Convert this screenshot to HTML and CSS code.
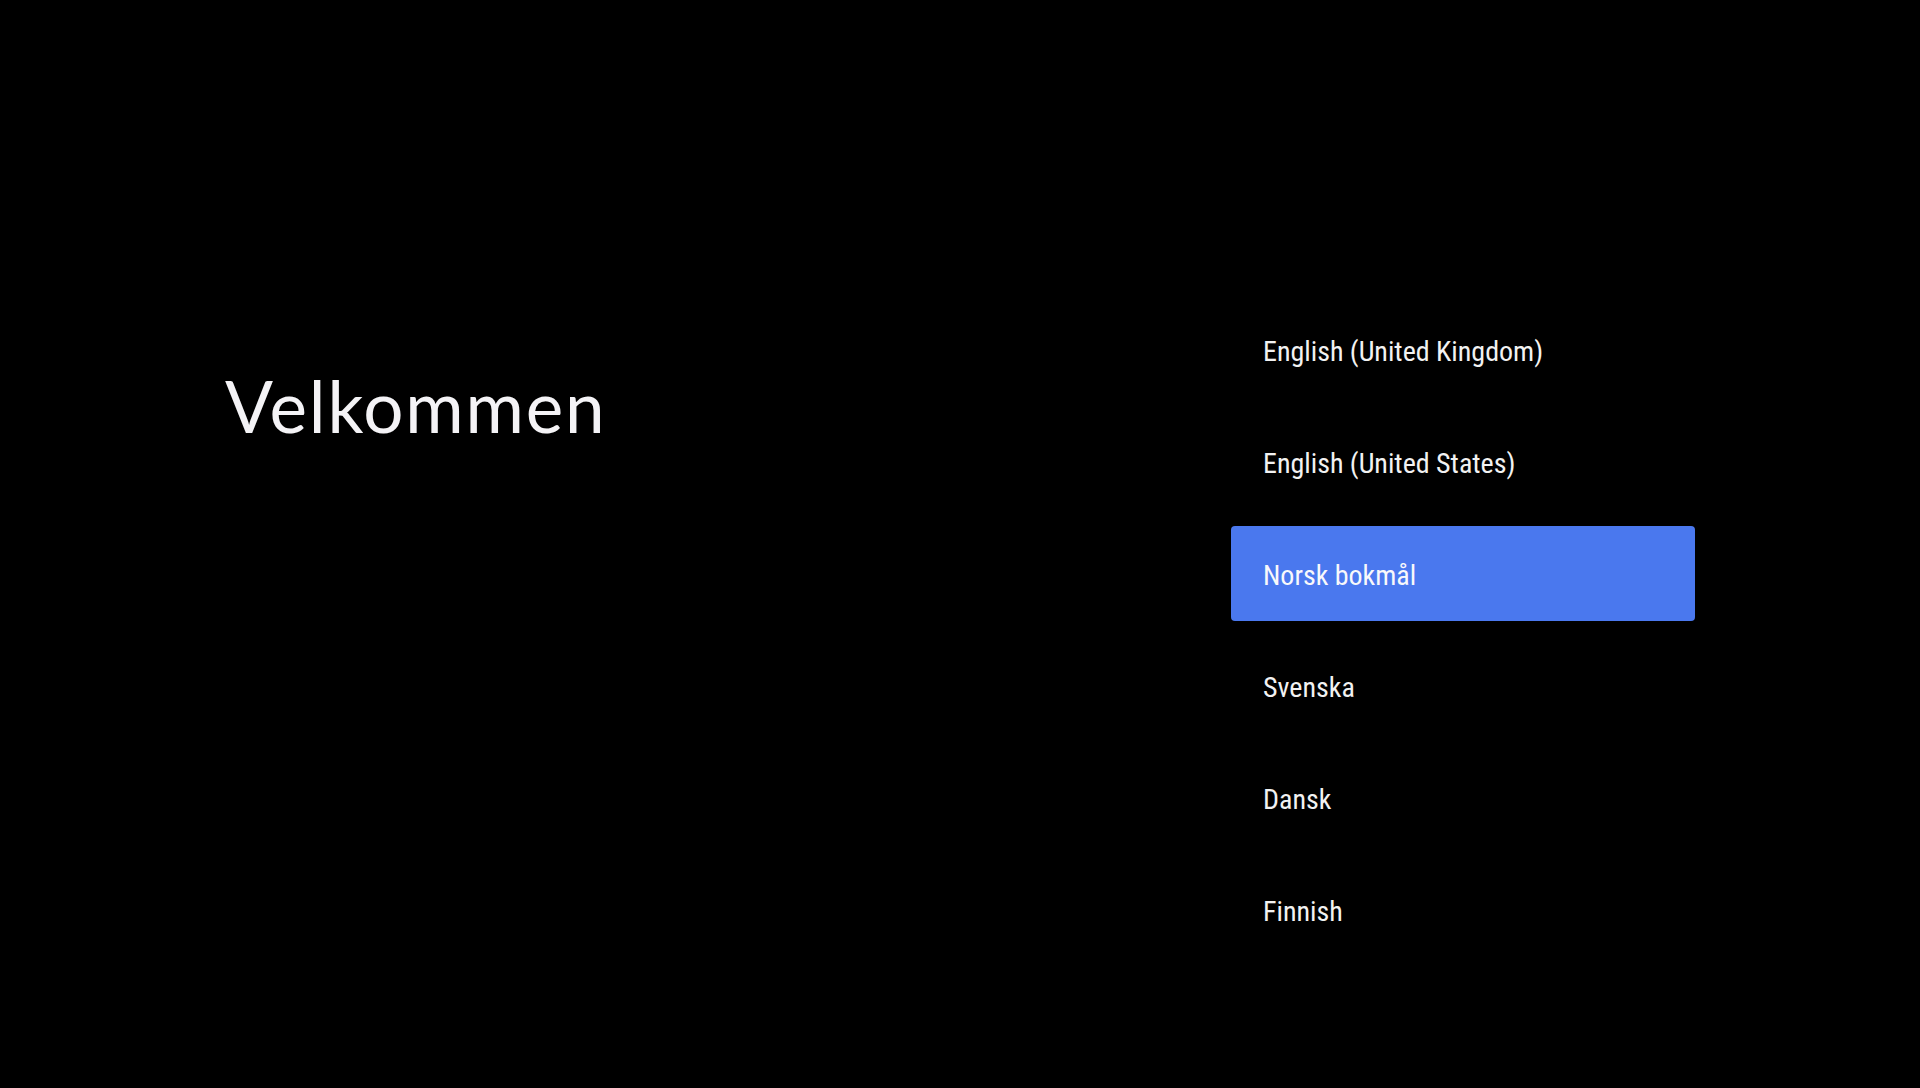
FILE: index.html
```html
<!DOCTYPE html>
<html lang="nb">
<head>
<meta charset="utf-8">
<title>Velkommen</title>
<link rel="stylesheet" href="styles.css">
</head>
<body>
<main class="setup">
  <section class="intro">
    <h1 class="title">Velkommen</h1>
  </section>
  <ul class="languages">
    <li class="lang">English (United Kingdom)</li>
    <li class="lang">English (United States)</li>
    <li class="lang is-focused">Norsk bokmål</li>
    <li class="lang">Svenska</li>
    <li class="lang">Dansk</li>
    <li class="lang">Finnish</li>
  </ul>
</main>
</body>
</html>
```
FILE: styles.css
```css
html, body {
  margin: 0;
  padding: 0;
  background: #000;
  height: 100%;
}

.setup {
  display: flex;
  width: 1920px;
  height: 1088px;
  box-sizing: border-box;
  padding-left: 225px;
}

.intro {
  width: 1006px;
  padding-top: 356px;
}

.title {
  margin: 0;
  font-family: "Lato", "Liberation Sans", sans-serif;
  font-weight: 400;
  font-size: 71px;
  line-height: 100px;
  letter-spacing: 1.8px;
  color: #f4f3f6;
}

.languages {
  list-style: none;
  margin: 0;
  padding: 302px 0 0 0;
  width: 464px;
  display: flex;
  flex-direction: column;
  gap: 17px;
}

.lang {
  height: 95px;
  box-sizing: border-box;
  padding: 4px 0 0 32px;
  display: flex;
  align-items: center;
  border-radius: 4px;
  font-family: "Roboto", "Liberation Sans", sans-serif;
  font-stretch: condensed;
  font-size: 28px;
  color: #f2f2f2;
}

.lang.is-focused {
  background: #4a78ee;
  color: #f8f8fb;
}
```
